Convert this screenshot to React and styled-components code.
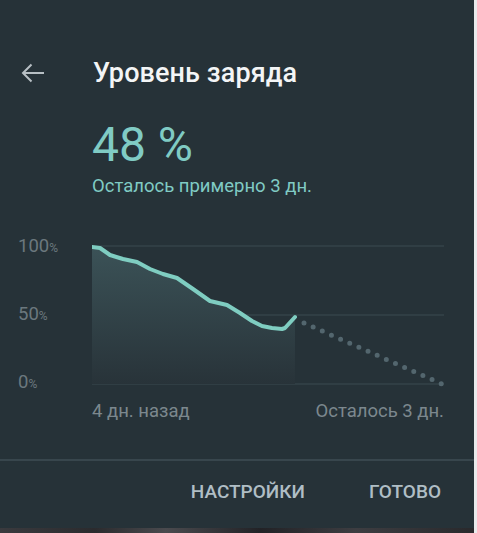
import React from "react";
import styled, { createGlobalStyle } from "styled-components";

const GlobalStyle = createGlobalStyle`
  html, body {
    margin: 0;
    padding: 0;
    background: #e9eaeb;
  }
  body {
    font-family: Roboto, "Noto Sans", sans-serif;
    -webkit-font-smoothing: antialiased;
  }
`;

// battery history, in chart coordinates (356 x 150 box)
const history = [
  [0, 7], [8, 8], [18, 15], [31, 19], [45, 22], [58, 29], [71, 34],
  [85, 38], [101, 49], [118, 61], [135, 65], [148, 73], [160, 81],
  [170, 86], [180, 88], [190, 89], [193, 88], [203, 77]
];

const linePath = history.map(([x, y], i) => `${i ? "L" : "M"}${x} ${y}`).join(" ");
const areaPath = `${linePath} L203 144 L0 144 Z`;

export default function App() {
  return (
    <>
      <GlobalStyle />
      <Screen>
        <Panel>
          <Header>
            <BackButton aria-label="back">
              <svg width="24" height="24" viewBox="0 0 24 24">
                <path
                  d="M23 12H3M10.5 3.5L2 12l8.5 8.5"
                  fill="none"
                  stroke="#b7bfc4"
                  strokeWidth="2"
                />
              </svg>
            </BackButton>
            <Title>Уровень заряда</Title>
          </Header>

          <Summary>
            <Percent>48 %</Percent>
            <Estimate>Осталось примерно 3 дн.</Estimate>
          </Summary>

          <Chart>
            <YAxis>
              <YLabel>100<small>%</small></YLabel>
              <YLabel>50<small>%</small></YLabel>
              <YLabel>0<small>%</small></YLabel>
            </YAxis>
            <svg width="356" height="150" viewBox="0 0 356 150">
              <defs>
                <linearGradient id="usage" x1="0" y1="0" x2="0" y2="1">
                  <stop offset="0" stopColor="#3b5257" />
                  <stop offset="1" stopColor="#283339" />
                </linearGradient>
              </defs>
              <line x1="0" y1="6" x2="352" y2="6" stroke="#3b4a50" strokeWidth="1" />
              <line x1="0" y1="75" x2="352" y2="75" stroke="#3b4a50" strokeWidth="1" />
              <line x1="0" y1="144" x2="352" y2="144" stroke="#3b4a50" strokeWidth="1" />
              <path d={areaPath} fill="url(#usage)" />
              <path
                d={linePath}
                fill="none"
                stroke="#7fcdc1"
                strokeWidth="4"
                strokeLinecap="round"
                strokeLinejoin="round"
              />
              <path
                d="M212 83 L350 144"
                fill="none"
                stroke="#53666e"
                strokeWidth="5"
                strokeLinecap="round"
                strokeDasharray="0 10"
              />
            </svg>
          </Chart>

          <XAxis>
            <span>4 дн. назад</span>
            <span>Осталось 3 дн.</span>
          </XAxis>

          <Actions>
            <ActionButton>Настройки</ActionButton>
            <ActionButton>Готово</ActionButton>
          </Actions>
        </Panel>
        <Backdrop />
      </Screen>
    </>
  );
}

const Screen = styled.div`
  width: 474px;
  height: 533px;
  display: flex;
  flex-direction: column;
  overflow: hidden;
`;

const Panel = styled.div`
  background: #263238;
  display: flex;
  flex-direction: column;
  height: 528px;
`;

const Header = styled.div`
  display: flex;
  align-items: center;
  height: 24px;
  margin-top: 61px;
  padding-left: 21px;
`;

const BackButton = styled.div`
  display: flex;
  width: 24px;
  height: 24px;
  margin-right: 48px;
`;

const Title = styled.h1`
  margin: 0;
  color: #f3f5f6;
  font-size: 27px;
  font-weight: 500;
  letter-spacing: 0.1px;
`;

const Summary = styled.div`
  display: flex;
  flex-direction: column;
  padding-left: 92px;
  margin-top: 32px;
`;

const Percent = styled.div`
  color: #80cbc4;
  font-size: 48px;
  font-weight: 400;
  line-height: 56px;
`;

const Estimate = styled.div`
  color: #80cbc4;
  font-size: 18.5px;
  line-height: 22px;
  margin-top: 2px;
`;

const Chart = styled.div`
  display: flex;
  margin-top: 43px;
  height: 150px;
`;

const YAxis = styled.div`
  width: 92px;
  box-sizing: border-box;
  padding-left: 18px;
  height: 158px;
  margin-top: -4px;
  display: flex;
  flex-direction: column;
  justify-content: space-between;
`;

const YLabel = styled.div`
  color: #6b787e;
  font-size: 18.5px;
  line-height: 20px;

  small {
    font-size: 12px;
  }
`;

const XAxis = styled.div`
  display: flex;
  justify-content: space-between;
  margin: 10px 30px 0 92px;
  color: #7c888e;
  font-size: 18.5px;
  line-height: 22px;
`;

const Actions = styled.div`
  display: flex;
  justify-content: flex-end;
  gap: 64px;
  margin-top: 37px;
  border-top: 2px solid #38464d;
  padding: 20px 33px 0 0;
`;

const ActionButton = styled.div`
  color: #b0bec5;
  font-size: 19px;
  font-weight: 500;
  text-transform: uppercase;
  line-height: 22px;
`;

const Backdrop = styled.div`
  flex: 1;
  background: linear-gradient(
    90deg,
    #3a3a3e 0%,
    #2b2b2e 20%,
    #4a4a4e 35%,
    #222226 55%,
    #3d3d41 75%,
    #29292c 100%
  );
`;
